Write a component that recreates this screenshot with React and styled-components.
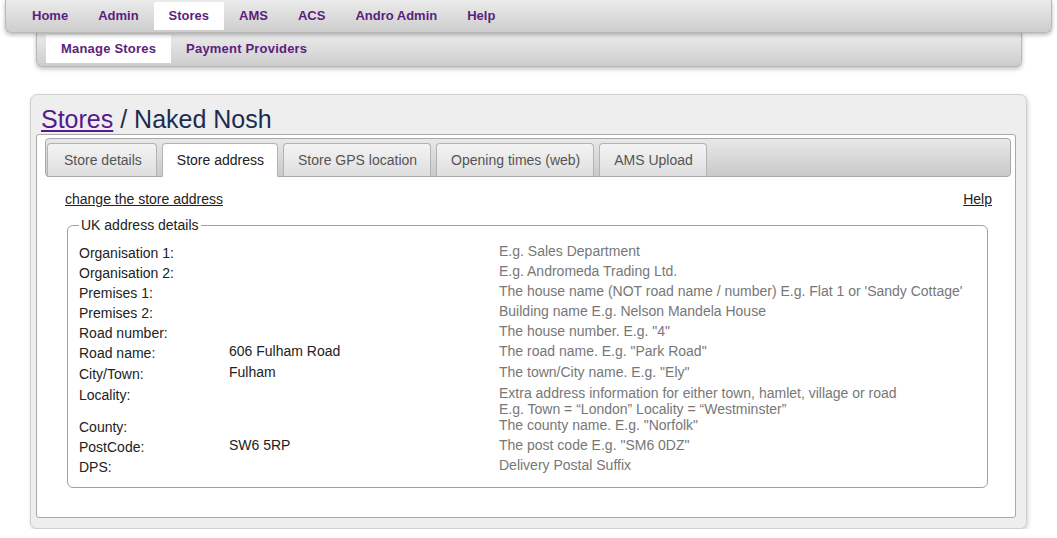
import styled, { createGlobalStyle } from "styled-components";

const GlobalStyle = createGlobalStyle`
  body {
    margin: 0;
    background: #fff;
    font-family: "Liberation Sans", Arial, sans-serif;
  }
`;

const TopNav = styled.nav`
  position: relative;
  z-index: 2;
  margin: 0 5px;
  height: 32px;
  display: flex;
  padding-left: 11px;
  background: linear-gradient(#ebebeb, #cdcdcd);
  border: 1px solid #b8b8b8;
  border-top: none;
  border-radius: 0 0 6px 6px;
  box-shadow: 0 2px 4px rgba(0, 0, 0, 0.28);
`;

const SubNav = styled.nav`
  position: relative;
  z-index: 1;
  margin: 0 35px 0 36px;
  height: 33px;
  display: flex;
  padding-left: 9px;
  background: linear-gradient(#ececec, #cdcdcd);
  border: 1px solid #b8b8b8;
  border-top: none;
  border-radius: 0 0 6px 6px;
  box-shadow: 0 2px 4px rgba(0, 0, 0, 0.25);
`;

const NavItem = styled.a`
  margin-top: 2px;
  height: 28px;
  line-height: 28px;
  padding: 0 15px;
  font-size: 13px;
  font-weight: bold;
  color: #5b1e7e;
  text-decoration: none;
  background: ${(p) => (p.$active ? "#fff" : "transparent")};
`;

const SubItem = styled(NavItem)`
  letter-spacing: 0.2px;
`;

const Panel = styled.section`
  margin: 27px 30px 0 30px;
  padding: 10px 10px 10px 5px;
  background: #eeeeee;
  border: 1px solid #cfcfcf;
  border-radius: 7px;
  box-shadow: 1px 2px 4px rgba(0, 0, 0, 0.18);
`;

const Title = styled.h1`
  margin: 0 0 0 5px;
  font-size: 25px;
  line-height: 29px;
  font-weight: normal;
  color: #1c2b50;
  a {
    color: #551a8b;
    text-decoration: underline;
  }
`;

const Box = styled.div`
  background: #fff;
  border: 1px solid #a9a9a9;
  border-radius: 3px;
  padding: 3px 4px 29px 8px;
`;

const TabBar = styled.div`
  display: flex;
  gap: 5px;
  height: 39px;
  box-sizing: border-box;
  align-items: flex-end;
  padding-left: 1px;
  background: linear-gradient(#e8e8e8, #c9c9c9);
  border: 1px solid #a8a8a8;
  border-radius: 4px;
`;

const Tab = styled.div`
  margin-bottom: -1px;
  height: 32px;
  line-height: 32px;
  padding: 0 13px 0 14px;
  font-size: 14px;
  color: ${(p) => (p.$active ? "#222" : "#555")};
  background: ${(p) => (p.$active ? "#fff" : "linear-gradient(#f4f4f4, #dedede)")};
  border: 1px solid #b3b3b3;
  border-bottom: ${(p) => (p.$active ? "1px solid #fff" : "1px solid #a8a8a8")};
  border-radius: 4px 4px 0 0;
  &:first-child {
    padding: 0 14px 0 16px;
  }
`;

const Content = styled.div`
  padding: 14px 19px 0 20px;
`;

const TopRow = styled.div`
  display: flex;
  justify-content: space-between;
  font-size: 14px;
  line-height: 16px;
  a {
    color: #222;
    text-decoration: underline;
  }
`;

const Fieldset = styled.fieldset`
  margin: 10px 4px 0 2px;
  padding: 8px 11px 12px 11px;
  border: 1px solid #9f9f9f;
  border-radius: 6px;
  legend {
    padding: 0 2px;
    font-size: 14px;
    line-height: 16px;
    color: #222;
  }
`;

const Row = styled.div`
  display: grid;
  grid-template-columns: 150px 270px 1fr;
  padding: ${(p) => (p.$pad ? p.$pad : "2px 0")};
  font-size: 14px;
  line-height: 16px;
`;

const Label = styled.span`
  padding-top: 2px;
  margin-bottom: -2px;
  color: #222;
`;

const Value = styled.span`
  color: #222;
`;

const Hint = styled.span`
  color: #777;
`;

const rows = [
  ["Organisation 1:", "", "E.g. Sales Department"],
  ["Organisation 2:", "", "E.g. Andromeda Trading Ltd."],
  ["Premises 1:", "", "The house name (NOT road name / number) E.g. Flat 1 or 'Sandy Cottage'"],
  ["Premises 2:", "", "Building name E.g. Nelson Mandela House"],
  ["Road number:", "", 'The house number. E.g. "4"'],
  ["Road name:", "606 Fulham Road", 'The road name. E.g. "Park Road"', "2px 0 3px"],
  ["City/Town:", "Fulham", 'The town/City name. E.g. "Ely"', "2px 0 3px"],
  [
    "Locality:",
    "",
    <>
      Extra address information for either town, hamlet, village or road
      <br />
      E.g. Town = “London” Locality = “Westminster”
    </>,
    "2px 0 0",
  ],
  ["County:", "", 'The county name. E.g. "Norfolk"', "0 0 2px"],
  ["PostCode:", "SW6 5RP", 'The post code E.g. "SM6 0DZ"'],
  ["DPS:", "", "Delivery Postal Suffix"],
];

const navItems = ["Home", "Admin", "Stores", "AMS", "ACS", "Andro Admin", "Help"];
const tabs = ["Store details", "Store address", "Store GPS location", "Opening times (web)", "AMS Upload"];

export default function App() {
  return (
    <>
      <GlobalStyle />
      <TopNav>
        {navItems.map((n) => (
          <NavItem key={n} $active={n === "Stores"}>
            {n}
          </NavItem>
        ))}
      </TopNav>
      <SubNav>
        <SubItem $active>Manage Stores</SubItem>
        <SubItem>Payment Providers</SubItem>
      </SubNav>
      <Panel>
        <Title>
          <a href="#">Stores</a> / Naked Nosh
        </Title>
        <Box>
          <TabBar>
            {tabs.map((t) => (
              <Tab key={t} $active={t === "Store address"}>
                {t}
              </Tab>
            ))}
          </TabBar>
          <Content>
            <TopRow>
              <a href="#">change the store address</a>
              <a href="#">Help</a>
            </TopRow>
            <Fieldset>
              <legend>UK address details</legend>
              {rows.map(([label, value, hint, pad]) => (
                <Row key={label} $pad={pad}>
                  <Label>{label}</Label>
                  <Value>{value}</Value>
                  <Hint>{hint}</Hint>
                </Row>
              ))}
            </Fieldset>
          </Content>
        </Box>
      </Panel>
    </>
  );
}
